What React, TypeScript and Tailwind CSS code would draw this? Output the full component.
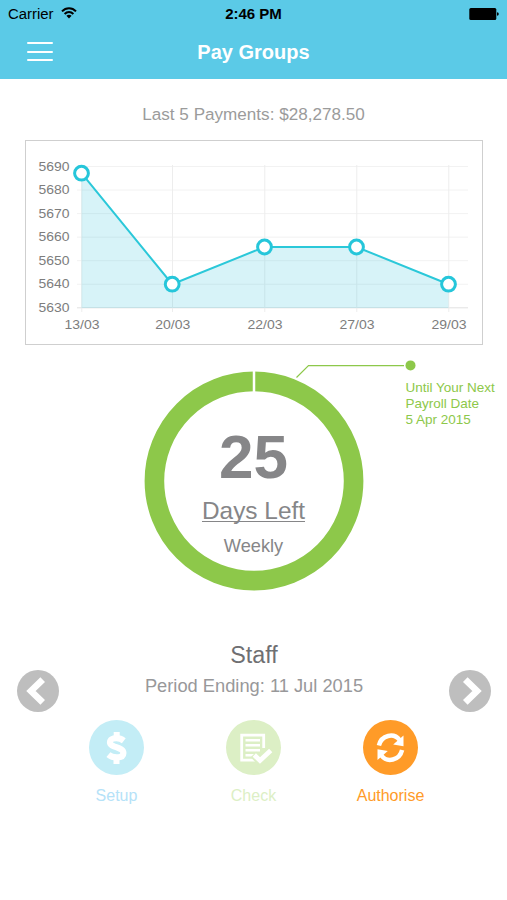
import type { ReactNode } from 'react';

const payments = [
  { date: '13/03', x: 55.5, y: 32.2 },
  { date: '20/03', x: 146.2, y: 143.2 },
  { date: '22/03', x: 238.5, y: 106 },
  { date: '27/03', x: 330.5, y: 106 },
  { date: '29/03', x: 422.5, y: 143.2 },
];

const ticks = [5690, 5680, 5670, 5660, 5650, 5640, 5630];

function StatusBar() {
  return (
    <div className="grid h-[28px] grid-cols-3 items-center px-2 text-black">
      <div className="flex items-center gap-[7px]">
        <span className="text-[14.9px] leading-[28px]">Carrier</span>
        <svg width="16" height="12" viewBox="0 0 16 12" fill="none" stroke="#000" strokeWidth="2" className="mb-[2px]">
          <path d="M1 4.4C5 .2 11 .2 15 4.4" />
          <path d="M3.6 7C6.2 4.4 9.8 4.4 12.4 7" />
          <path d="M5.4 8.8C7 7.3 9 7.3 10.6 8.8L8 11.4Z" fill="#000" stroke="none" />
        </svg>
      </div>
      <div className="text-center text-[15px] leading-[28px] font-bold">2:46 PM</div>
      <div className="flex justify-end">
        <svg width="31" height="12" viewBox="0 0 31 12">
          <rect x="1.3" width="27" height="12" rx="1.5" />
          <path d="M29 4.2Q30.8 4.4 30.8 6T29 7.8Z" />
        </svg>
      </div>
    </div>
  );
}

function PaymentsChart() {
  const line = payments.map((p) => `${p.x},${p.y}`).join(' ');
  return (
    <svg width="455" height="203" viewBox="0 0 455 203" className="font-['Liberation_Sans',Arial,sans-serif]">
      {ticks.map((t, i) => (
        <g key={t}>
          <path d={`M51 ${25.5 + i * 23.55}H442`} stroke={i === 6 ? '#e2e2e2' : '#f2f2f2'} />
          <text x="12.5" y={29.7 + i * 23.5} fontSize="12.7" fill="#7d7d7d" textLength="31" lengthAdjust="spacingAndGlyphs">
            {t}
          </text>
        </g>
      ))}
      {payments.map((p) => (
        <g key={p.date}>
          <path d={`M${p.x + 0.3} 24V171`} stroke="#ededed" />
          <text x={p.x - 17} y="187.6" fontSize="12.7" fill="#7d7d7d" textLength="35" lengthAdjust="spacingAndGlyphs">
            {p.date}
          </text>
        </g>
      ))}
      <polygon points={`55.5,167 ${line} 422.5,167`} fill="#22bfd8" fillOpacity="0.18" />
      <polyline points={line} fill="none" stroke="#2bc8d9" strokeWidth="2" />
      {payments.map((p) => (
        <circle key={p.date} cx={p.x} cy={p.y} r="6.9" fill="#fff" stroke="#26c6da" strokeWidth="3" />
      ))}
    </svg>
  );
}

function Countdown() {
  return (
    <section className="relative mt-[13px] h-[248px]">
      <svg width="507" height="248" viewBox="0 358 507 248" className="absolute inset-0">
        <circle cx="254" cy="481" r="99.6" fill="none" stroke="#8dc84a" strokeWidth="19.6" />
        <path d="M254 370V392.5" stroke="#fff" strokeWidth="2.5" />
        <path d="M296.5 377.5L308.5 365.6H404" fill="none" stroke="#8dc84a" strokeWidth="1.2" />
        <circle cx="410.5" cy="365.4" r="5" fill="#8dc84a" />
      </svg>
      <div className="relative flex flex-col items-center pt-[64px] text-[#868688]">
        <div className="text-[62px] leading-[70px] font-bold">25</div>
        <div className="mt-[4px] text-[24.4px] leading-[30px] underline decoration-1 underline-offset-[2px] [text-decoration-skip-ink:none]">
          Days Left
        </div>
        <div className="mt-[8px] text-[18.2px] leading-[24px]">Weekly</div>
      </div>
      <div className="absolute top-[22px] left-[405.5px] text-[13.5px] leading-[16px] whitespace-nowrap text-[#8dc84a]">
        Until Your Next
        <br />
        Payroll Date
        <br />5 Apr 2015
      </div>
    </section>
  );
}

function ArrowButton({ next = false }: { next?: boolean }) {
  return (
    <button aria-label={next ? 'Next' : 'Previous'} className="block h-[42px] w-[42px]">
      <svg width="42" height="42" viewBox="0 0 42 42">
        <circle cx="21" cy="21" r="21" fill="#bebebe" />
        <path
          d={next ? 'M16.3 9.6L28 21L16.3 32.4' : 'M25.7 9.6L14 21L25.7 32.4'}
          fill="none"
          stroke="#fff"
          strokeWidth="6.6"
        />
      </svg>
    </button>
  );
}

function Action({ label, disc, text, children }: { label: string; disc: string; text: string; children: ReactNode }) {
  return (
    <div className={`flex w-[137px] flex-col items-center ${text}`}>
      <svg width="55" height="55" viewBox="0 0 55 55" fill="none" stroke="#fff">
        <circle cx="27.5" cy="27.5" r="27.5" fill={disc} stroke="none" />
        {children}
      </svg>
      <span className="mt-[11px] text-[16px] leading-[20px]">{label}</span>
    </div>
  );
}

export default function App() {
  return (
    <div className="h-[900px] w-[507px] overflow-hidden bg-white font-['Liberation_Sans',Arial,sans-serif]">
      <header className="h-[79px] bg-[#5bcae7]">
        <StatusBar />
        <div className="grid h-[48px] grid-cols-[1fr_auto_1fr] items-center">
          <button aria-label="Menu" className="mb-px ml-[27px] flex w-[26px] flex-col gap-[6.5px]">
            <span className="h-[2px] rounded-full bg-white" />
            <span className="h-[2px] rounded-full bg-white" />
            <span className="h-[2px] rounded-full bg-white" />
          </button>
          <h1 className="text-[20px] leading-[48px] font-bold text-white">Pay Groups</h1>
        </div>
      </header>

      <p className="mt-[25px] text-center text-[17.1px] leading-[22px] text-[#9b9b9b]">Last 5 Payments: $28,278.50</p>
      <div className="mt-[14px] ml-[25px] h-[205px] w-[457.5px] border border-[#cfcfcf]">
        <PaymentsChart />
      </div>

      <Countdown />

      <section className="mt-[17px] flex items-start justify-between px-[16px]">
        <div className="pt-[46.5px] pl-[1px]">
          <ArrowButton />
        </div>
        <div className="flex flex-col items-center pt-[17px]">
          <h2 className="text-[23.3px] leading-[30px] text-[#6f6f72]">Staff</h2>
          <p className="mt-[2px] text-[18.3px] leading-[28px] text-[#98989a]">Period Ending: 11 Jul 2015</p>
        </div>
        <div className="pt-[46.5px]">
          <ArrowButton next />
        </div>
      </section>

      <section className="mt-[8.5px] flex justify-center">
        <Action label="Setup" disc="#c3edf6" text="text-[#b5e2f8]">
          <path
            d="M34.8 20.8C32.5 19 30 18.2 27.3 18.2C23.4 18.2 21 19.8 21 22.4C21 27.6 34.4 26.8 34.4 33C34.4 36 32 37.4 27.7 37.4C24.4 37.4 21.8 36.6 19.4 34.6"
            strokeWidth="6.2"
          />
          <path d="M27.7 12V18M27.5 37V44" strokeWidth="6" strokeLinejoin="round" />
        </Action>
        <Action label="Check" disc="#dcefc5" text="text-[#dcefc5]">
          <path d="M37.7 28V15.2H15.7V40.2H29" strokeWidth="2.8" />
          <path d="M19.5 20.3H34M19.5 25.3H34M19.5 30.3H34M19.5 35.3H29" strokeWidth="2.4" />
          <path d="M27.5 34.5L34 41L45.5 29.5" stroke="#dcefc5" strokeWidth="8" />
          <path d="M28.3 35L34 40.5L44.7 30.5" strokeWidth="4.7" />
        </Action>
        <Action label="Authorise" disc="#ff9b28" text="text-[#ff9b28]">
          <path d="M15.9 25.5C18.5 14.8 31 12.6 36.6 20" strokeWidth="4.5" />
          <path d="M40.5 15.5V26.2L30.2 24.4Z" fill="#fff" stroke="none" />
          <path d="M39.1 30C36.5 40.7 24 42.9 18.4 35.5" strokeWidth="4.5" />
          <path d="M14.5 40V29.3L24.8 31.1Z" fill="#fff" stroke="none" />
        </Action>
      </section>
    </div>
  );
}
